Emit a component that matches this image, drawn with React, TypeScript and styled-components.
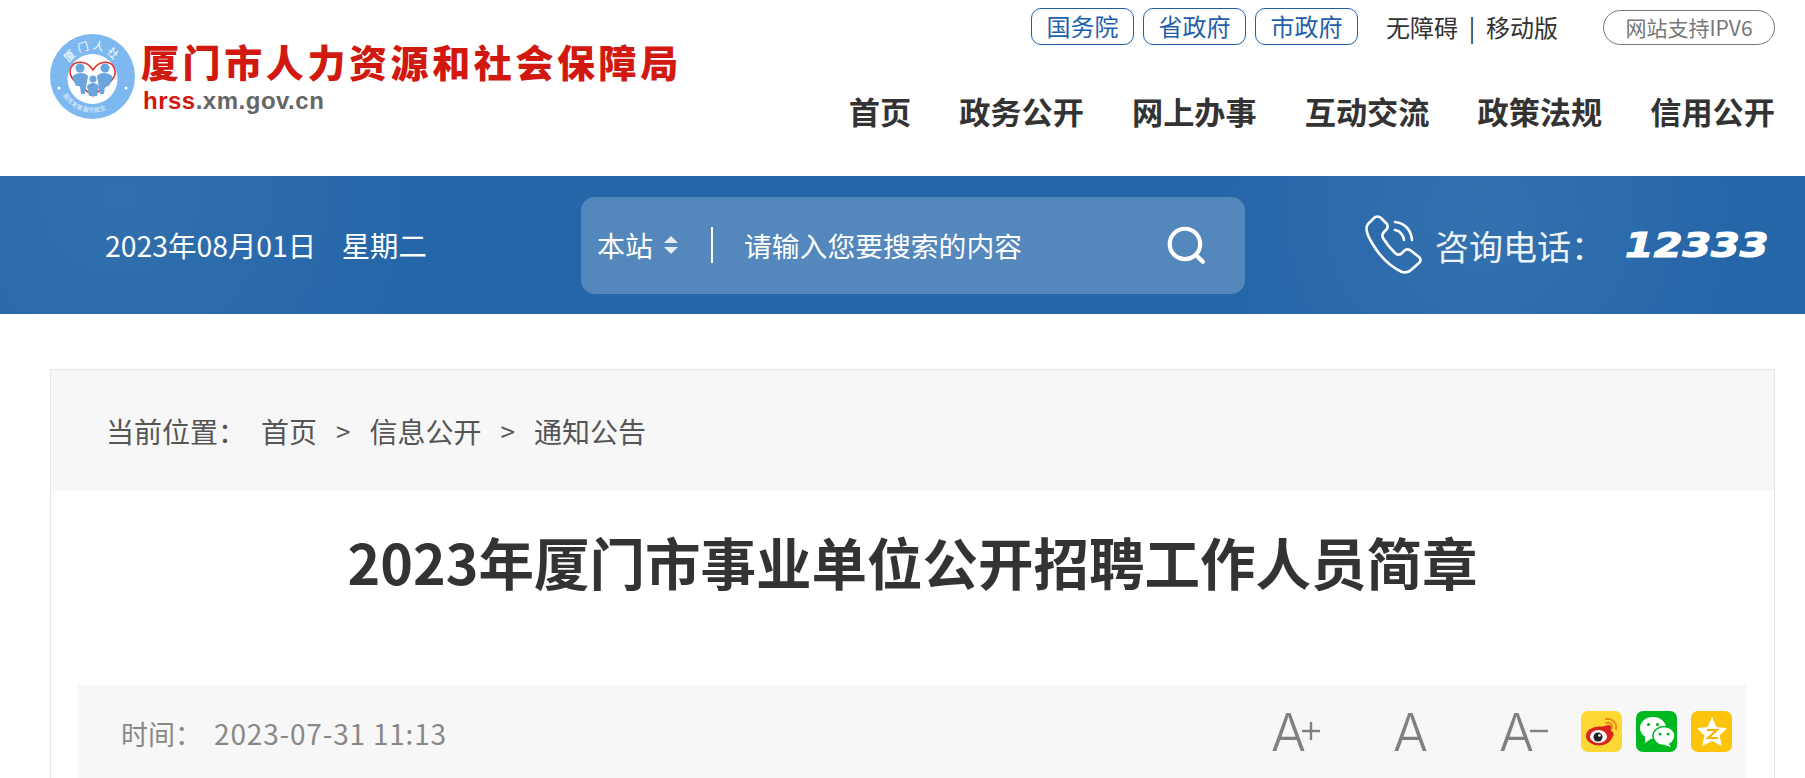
import React from "react";
import styled, { createGlobalStyle } from "styled-components";

const CJK = `"Noto Sans CJK SC", "Noto Sans", sans-serif`;

const Global = createGlobalStyle`
  html, body { margin: 0; padding: 0; background: #fff; }
  body { font-family: ${CJK}; overflow: hidden; }
`;
const Page = styled.div`
  width: 1805px;
  height: 778px;
  overflow: hidden;
`;
const Header = styled.header`
  height: 176px;
  padding: 8px 30px 0 50px;
  box-sizing: border-box;
  display: flex;
  justify-content: space-between;
`;
const Brand = styled.div`
  display: flex;
  align-items: flex-start;
  gap: 6px;
  padding-top: 26px;
`;
const BrandText = styled.div`
  display: flex;
  flex-direction: column;
  padding-top: 4px;
`;
const BrandName = styled.div`
  font-family: "Noto Sans CJK SC", "Liberation Serif", serif;
  font-weight: 900;
  font-size: 38px;
  line-height: 46px;
  letter-spacing: 3.6px;
  color: #d2190f;
  white-space: nowrap;
`;
const BrandUrl = styled.div`
  font-family: "Liberation Sans", sans-serif;
  font-weight: 700;
  font-size: 24px;
  line-height: 28px;
  letter-spacing: 0.5px;
  color: #666;
  margin: 3px 0 0 2px;
`;
const UrlAccent = styled.span`
  color: #d2190f;
`;
const HeaderRight = styled.div`
  display: flex;
  flex-direction: column;
  align-items: flex-end;
`;
const TopLinks = styled.div`
  display: flex;
  align-items: center;
  height: 37px;
`;
const GovLink = styled.a`
  width: 103px;
  height: 37px;
  box-sizing: border-box;
  border: 1px solid #1f5fa8;
  border-radius: 10px;
  color: #1f5fa8;
  font-size: 24px;
  line-height: 33px;
  text-align: center;
  margin-right: 9px;
`;
const PlainLinks = styled.div`
  font-size: 24px;
  line-height: 37px;
  color: #333;
  margin-left: 19px;
  white-space: pre;
`;
const Ipv6 = styled.div`
  width: 172px;
  height: 35px;
  box-sizing: border-box;
  border: 1px solid #777;
  border-radius: 18px;
  color: #777;
  font-size: 21px;
  line-height: 32px;
  text-align: center;
  margin-left: 45px;
  margin-top: 2px;
`;
const Nav = styled.nav`
  display: flex;
  gap: 48px;
  margin-top: 44px;
`;
const NavItem = styled.a`
  font-size: 31.2px;
  font-weight: 700;
  line-height: 44px;
  color: #333;
  white-space: nowrap;
`;
const Band = styled.div`
  height: 138px;
  background:
    radial-gradient(circle at 1480px 40px, rgba(255,255,255,0.07), transparent 260px),
    radial-gradient(circle at 120px 20px, rgba(255,255,255,0.06), transparent 300px),
    #2566a9;
  display: flex;
  align-items: center;
  padding-left: 105px;
  box-sizing: border-box;
  color: #fff;
`;
const DateText = styled.div`
  width: 476px;
  font-size: 28.4px;
  white-space: pre;
  line-height: 40px;
`;
const Search = styled.div`
  width: 664px;
  height: 97px;
  border-radius: 14px;
  background: rgba(255, 255, 255, 0.22);
  display: flex;
  align-items: center;
  padding: 0 38px 0 16px;
  box-sizing: border-box;
`;
const Scope = styled.div`
  font-size: 28px;
  display: flex;
  align-items: center;
  gap: 11px;
  width: 116px;
  height: 36px;
  box-sizing: border-box;
  border-right: 2px solid #fff;
  line-height: 36px;
`;
const Placeholder = styled.div`
  flex: 1;
  font-size: 27.8px;
  padding-left: 31px;
  white-space: nowrap;
`;
const Phone = styled.div`
  display: flex;
  align-items: center;
  margin-left: 120px;
`;
const PhoneLabel = styled.span`
  font-size: 34px;
  margin-left: 12px;
  opacity: 0.92;
  white-space: nowrap;
`;
const PhoneNumber = styled.span`
  display: inline-block;
  font-family: "DejaVu Sans", sans-serif;
  font-style: italic;
  font-weight: 700;
  font-size: 33px;
  -webkit-text-stroke: 1.2px #fff;
  margin-left: 20px;
  transform: scaleX(1.25);
  transform-origin: left center;
`;
const Card = styled.main`
  margin: 55px 30px 0 50px;
  border: 1px solid #e6e6e6;
  border-bottom: 0;
  height: 420px;
`;
const Crumbs = styled.div`
  height: 121px;
  background: #f7f7f7;
  padding-left: 55px;
  display: flex;
  align-items: center;
  color: #555;
  font-size: 28px;
  white-space: nowrap;
`;
const CrumbLabel = styled.span`
  width: 155px;
`;
const CrumbSep = styled.span`
  margin: 0 19px;
  font-size: 26px;
`;
const Title = styled.h1`
  margin: 0;
  height: 194px;
  box-sizing: border-box;
  padding-top: 32px;
  text-align: center;
  font-size: 55.5px;
  line-height: 76px;
  font-weight: 700;
  color: #333;
  white-space: nowrap;
`;
const Meta = styled.div`
  margin: 0 28px 0 27px;
  height: 110px;
  background: #f7f7f7;
  display: flex;
  align-items: flex-start;
  padding: 26px 14px 0 43px;
  color: #888;
`;
const MetaText = styled.div`
  flex: 1;
  font-size: 27px;
  line-height: 44px;
  white-space: pre;
`;
const MetaDate = styled.span`
  font-size: 28px;
  letter-spacing: 0.8px;
`;
const Resize = styled.div`
  display: flex;
  align-items: baseline;
  color: #808080;
  font-family: Inter, "Liberation Sans", sans-serif;
  font-weight: 300;
  font-size: 52px;
  line-height: 44px;
  width: 310px;
`;
const ResizeItem = styled.span<{ $w: number }>`
  display: inline-block;
  width: ${(p) => p.$w}px;
  white-space: nowrap;
`;
const SignIcon = styled.svg`
  width: 18px;
  height: 18px;
  margin-left: -4px;
  vertical-align: 11px;
`;
const Shares = styled.div`
  display: flex;
  gap: 14px;
`;
const Share = styled.div<{ $bg: string }>`
  width: 41px;
  height: 41px;
  border-radius: 7px;
  background: ${(p) => p.$bg};
  display: flex;
  align-items: center;
  justify-content: center;
`;

const Logo = () => (
  <svg width="85" height="85" viewBox="0 0 85 85">
    <circle cx="42.5" cy="42.5" r="42.5" fill="#7db8f0" />
    <circle cx="42.5" cy="45" r="25" fill="#fff" />
    <defs>
      <path id="logoArc" d="M15.5 42.5 A27 27 0 0 1 69.5 42.5" />
      <path id="logoArcBottom" d="M9 50 A34 34 0 0 0 76 50" />
    </defs>
    <text fontSize="11" fill="#fff" fontFamily="Noto Sans CJK SC" letterSpacing="3">
      <textPath href="#logoArc" startOffset="14">厦门人社</textPath>
    </text>
    <text fontSize="6" fill="#eaf4fd" fontFamily="Noto Sans CJK SC">
      <textPath href="#logoArcBottom" startOffset="12">服务发展  服务民生</textPath>
    </text>
    <path d="M43 36 C37 26 22 25 20 37 C19 46 34 54 43 62 C52 54 67 46 65 37 C63 25 49 26 43 36Z" fill="none" stroke="#e0322e" strokeWidth="1.6" />
    <circle cx="30" cy="34" r="4.5" fill="#6aa5dc" />
    <circle cx="55" cy="34" r="4.5" fill="#6aa5dc" />
    <circle cx="43" cy="45" r="3.5" fill="#6aa5dc" />
    <path d="M22 43 C26 38 35 38 38 42 L35 60 H31 L30 52 L26 52 Z" fill="#6aa5dc" />
    <path d="M63 43 C59 38 50 38 47 42 L50 60 H54 L55 52 L59 52 Z" fill="#6aa5dc" />
    <path d="M37 52 C40 48 46 48 49 52 L47 62 H39 Z" fill="#6aa5dc" />
    <circle cx="9" cy="54" r="1.5" fill="#fff" />
    <circle cx="76" cy="54" r="1.5" fill="#fff" />
  </svg>
);

const PhoneIcon = () => (
  <svg width="58" height="60" viewBox="0 0 58 60" fill="none" stroke="#fff" strokeWidth="2.6" strokeLinecap="round" strokeLinejoin="round">
    <path d="M9 3 L3 9 C0 13 2 20 7 28 C14 40 24 51 37 57 C41 58 44 57 46 55 L54 48 C56 46 56 44 54 42 L45 35 C43 34 41 34 39 36 L36 39 C34 40 32 40 30 38 C25 33 21 28 18 23 C17 21 17 19 19 17 L21 15 C23 13 23 11 22 9 L16 3 C14 1 11 1 9 3 Z" />
    <path d="M30 7 C39 8 46 14 47 25" />
    <path d="M30 15 C35 16 38 19 39 25" />
  </svg>
);

const SearchIcon = () => (
  <svg width="42" height="42" viewBox="0 0 40 40" fill="none" stroke="#fff" strokeWidth="4" strokeLinecap="round">
    <circle cx="19" cy="19" r="14.5" />
    <path d="M30 30 L36 36" />
  </svg>
);

const UpDown = () => (
  <svg width="14" height="20" viewBox="0 0 14 20" fill="#e6edf5">
    <path d="M7 1 L14 8 H0 Z" />
    <path d="M7 19 L14 12 H0 Z" />
  </svg>
);

const Plus = () => (
  <SignIcon viewBox="0 0 18 18" stroke="#808080" strokeWidth="2.4">
    <path d="M0 9 H18 M9 0 V18" />
  </SignIcon>
);

const Minus = () => (
  <SignIcon viewBox="0 0 18 18" stroke="#808080" strokeWidth="2.4">
    <path d="M0 9 H18" />
  </SignIcon>
);

const Weibo = () => (
  <svg width="34" height="30" viewBox="0 0 34 30">
    <ellipse cx="14" cy="19" rx="13" ry="9.5" fill="#d9261c" />
    <path d="M20 9 C25 6 28 10 26 14 C30 15 29 20 26 22 L14 10 Z" fill="#d9261c" />
    <ellipse cx="13.5" cy="19.5" rx="8.5" ry="6.5" fill="#fff" />
    <circle cx="13" cy="20" r="4.5" fill="#222" />
    <circle cx="14.5" cy="18.5" r="1.3" fill="#fff" />
    <path d="M21 2 C27 1 32 6 31 12 M21 6 C25 5 28 8 27 11" fill="none" stroke="#ef8a14" strokeWidth="2" strokeLinecap="round" />
  </svg>
);

const Wechat = () => (
  <svg width="36" height="32" viewBox="0 0 36 32">
    <ellipse cx="14" cy="12" rx="13" ry="11" fill="#fff" />
    <path d="M6 20 L6 27 L13 22 Z" fill="#fff" />
    <ellipse cx="25" cy="20" rx="11" ry="9.5" fill="#fff" stroke="#00b81f" strokeWidth="1.5" />
    <path d="M29 27 L32 31 L25 29 Z" fill="#fff" />
    <circle cx="9.5" cy="8.5" r="1.6" fill="#00b81f" />
    <circle cx="18.5" cy="8.5" r="1.6" fill="#00b81f" />
    <circle cx="21" cy="18" r="1.5" fill="#00b81f" />
    <circle cx="29" cy="18" r="1.5" fill="#00b81f" />
  </svg>
);

const Qzone = () => (
  <svg width="32" height="30" viewBox="0 0 32 30">
    <path d="M16 0 L20.5 10 L31 11.2 L23.5 18.5 L25.8 29 L16 24 L6.2 29 L8.5 18.5 L1 11.2 L11.5 10 Z" fill="#fff" />
    <path d="M11 13 H21 L12 21 H22" fill="none" stroke="#f4b400" strokeWidth="2" />
  </svg>
);

export default function App() {
  return (
    <Page>
      <Global />
      <Header>
        <Brand>
          <Logo />
          <BrandText>
            <BrandName>厦门市人力资源和社会保障局</BrandName>
            <BrandUrl><UrlAccent>hrss</UrlAccent>.xm.gov.cn</BrandUrl>
          </BrandText>
        </Brand>
        <HeaderRight>
          <TopLinks>
            <GovLink>国务院</GovLink>
            <GovLink>省政府</GovLink>
            <GovLink>市政府</GovLink>
            <PlainLinks>无障碍  |  移动版</PlainLinks>
            <Ipv6>网站支持IPV6</Ipv6>
          </TopLinks>
          <Nav>
            {["首页", "政务公开", "网上办事", "互动交流", "政策法规", "信用公开"].map((n) => (
              <NavItem key={n}>{n}</NavItem>
            ))}
          </Nav>
        </HeaderRight>
      </Header>
      <Band>
        <DateText>2023年08月01日    星期二</DateText>
        <Search>
          <Scope>本站<UpDown /></Scope>
          <Placeholder>请输入您要搜索的内容</Placeholder>
          <SearchIcon />
        </Search>
        <Phone>
          <PhoneIcon />
          <PhoneLabel>咨询电话：</PhoneLabel>
          <PhoneNumber>12333</PhoneNumber>
        </Phone>
      </Band>
      <Card>
        <Crumbs>
          <CrumbLabel>当前位置：</CrumbLabel>
          首页<CrumbSep>&gt;</CrumbSep>信息公开<CrumbSep>&gt;</CrumbSep>通知公告
        </Crumbs>
        <Title>2023年厦门市事业单位公开招聘工作人员简章</Title>
        <Meta>
          <MetaText>时间：  <MetaDate>2023-07-31 11:13</MetaDate></MetaText>
          <Resize>
            <ResizeItem $w={122}>A<Plus /></ResizeItem>
            <ResizeItem $w={106}>A</ResizeItem>
            <ResizeItem $w={82}>A<Minus /></ResizeItem>
          </Resize>
          <Shares>
            <Share $bg="#fdd835"><Weibo /></Share>
            <Share $bg="#00b81f"><Wechat /></Share>
            <Share $bg="#fcc40a"><Qzone /></Share>
          </Shares>
        </Meta>
      </Card>
    </Page>
  );
}
